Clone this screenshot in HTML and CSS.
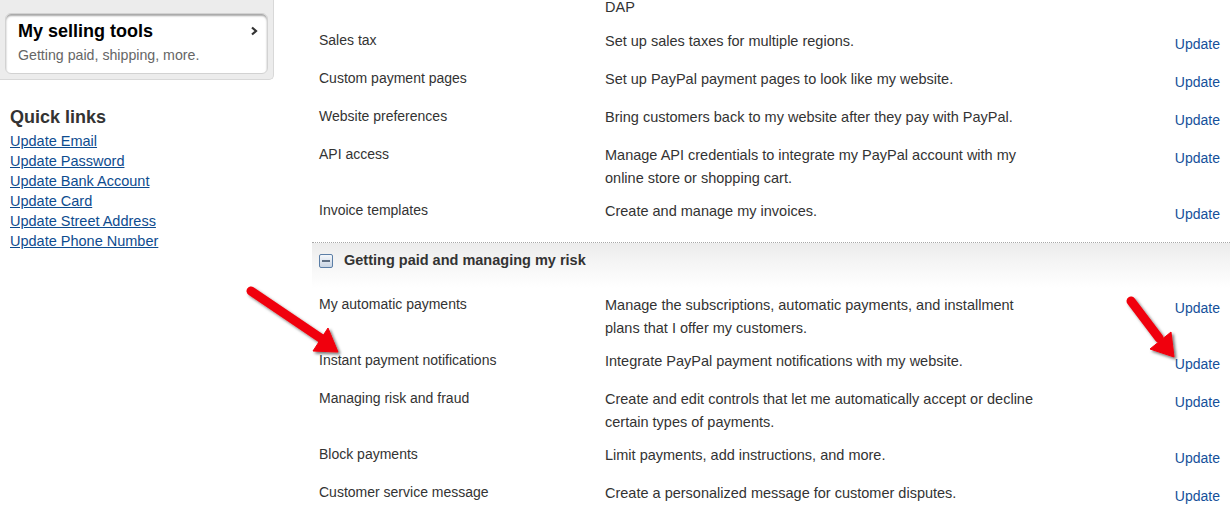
FILE: index.html
```html
<!DOCTYPE html>
<html lang="en">
<head>
<meta charset="utf-8">
<title>My selling tools</title>
<link rel="stylesheet" href="styles.css">
</head>
<body>
<div class="page">
  <aside class="sidebar">
    <div class="panel">
      <a class="tools-box" href="#">
        <div class="tools-title-row">
          <span class="tools-title">My selling tools</span>
          <svg class="chev" width="8" height="10" viewBox="0 0 8 10"><polyline points="2,1.5 6,5 2,8.5" fill="none" stroke="#333" stroke-width="2.2"/></svg>
        </div>
        <div class="tools-sub">Getting paid, shipping, more.</div>
      </a>
    </div>
    <h3 class="ql-title">Quick links</h3>
    <ul class="ql-list">
      <li><a href="#">Update Email</a></li>
      <li><a href="#">Update Password</a></li>
      <li><a href="#">Update Bank Account</a></li>
      <li><a href="#">Update Card</a></li>
      <li><a href="#">Update Street Address</a></li>
      <li><a href="#">Update Phone Number</a></li>
    </ul>
  </aside>

  <main class="main">
    <div class="row row-cont"><div class="label"></div><div class="desc">DAP</div><div class="action"></div></div>
    <div class="row"><div class="label">Sales tax</div><div class="desc">Set up sales taxes for multiple regions.</div><div class="action"><a href="#">Update</a></div></div>
    <div class="row"><div class="label">Custom payment pages</div><div class="desc">Set up PayPal payment pages to look like my website.</div><div class="action"><a href="#">Update</a></div></div>
    <div class="row"><div class="label">Website preferences</div><div class="desc">Bring customers back to my website after they pay with PayPal.</div><div class="action"><a href="#">Update</a></div></div>
    <div class="row"><div class="label">API access</div><div class="desc">Manage API credentials to integrate my PayPal account with my online store or shopping cart.</div><div class="action"><a href="#">Update</a></div></div>
    <div class="row"><div class="label">Invoice templates</div><div class="desc">Create and manage my invoices.</div><div class="action"><a href="#">Update</a></div></div>

    <section class="section">
      <div class="section-head">
        <span class="toggle"><span class="minus"></span></span>
        <span class="section-title">Getting paid and managing my risk</span>
      </div>
      <div class="row"><div class="label">My automatic payments</div><div class="desc">Manage the subscriptions, automatic payments, and installment plans that I offer my customers.</div><div class="action"><a href="#">Update</a></div></div>
      <div class="row"><div class="label">Instant payment notifications</div><div class="desc">Integrate PayPal payment notifications with my website.</div><div class="action"><a href="#">Update</a></div></div>
      <div class="row"><div class="label">Managing risk and fraud</div><div class="desc">Create and edit controls that let me automatically accept or decline certain types of payments.</div><div class="action"><a href="#">Update</a></div></div>
      <div class="row"><div class="label">Block payments</div><div class="desc">Limit payments, add instructions, and more.</div><div class="action"><a href="#">Update</a></div></div>
      <div class="row"><div class="label">Customer service message</div><div class="desc">Create a personalized message for customer disputes.</div><div class="action"><a href="#">Update</a></div></div>
    </section>
  </main>
</div>

<svg class="annotations" width="1230" height="523" viewBox="0 0 1230 523" aria-hidden="true">
  <defs>
    <filter id="sh" x="-20%" y="-20%" width="140%" height="140%">
      <feDropShadow dx="2" dy="2" stdDeviation="1.6" flood-color="#000" flood-opacity="0.55"/>
    </filter>
  </defs>
  <g filter="url(#sh)" fill="#f0060a" stroke="#f0060a">
    <line x1="251" y1="291" x2="322" y2="339" stroke-width="9" stroke-linecap="round"/>
    <polygon points="313,351 328,328 338,352" stroke-width="1" stroke-linejoin="round"/>
    <line x1="1131" y1="301" x2="1159" y2="338" stroke-width="9" stroke-linecap="round"/>
    <polygon points="1150,349 1171,332 1174,357" stroke-width="1" stroke-linejoin="round"/>
  </g>
</svg>
</body>
</html>
```

FILE: styles.css
```css
* { box-sizing: border-box; }

html, body {
  margin: 0;
  padding: 0;
  background: #fff;
}

body {
  font-family: "Liberation Sans", Arial, sans-serif;
  font-size: 14px;
  color: #333;
  width: 1230px;
  height: 523px;
  overflow: hidden;
  position: relative;
}

a { color: #0e4c8f; }

.page {
  display: flex;
  align-items: flex-start;
}

/* Sidebar */
.sidebar {
  width: 312px;
  flex: 0 0 312px;
}

.panel {
  width: 274px;
  height: 80px;
  background: #ececec;
  border-right: 1px solid #d8d8d8;
  border-bottom: 1px solid #d8d8d8;
  border-bottom-right-radius: 5px;
  padding: 13px 5px 0 5px;
}

.tools-box {
  display: block;
  height: 61px;
  background: #fff;
  border: 1px solid #d2d2d2;
  border-radius: 6px;
  box-shadow: inset 0 2px 2px rgba(0, 0, 0, 0.35);
  padding: 6px 9px 0 12px;
  text-decoration: none;
  color: #000;
}

.tools-title-row {
  display: flex;
  align-items: center;
  justify-content: space-between;
  height: 22px;
}

.tools-title {
  font-size: 18px;
  font-weight: bold;
  line-height: 22px;
  color: #000;
}

.chev { margin-top: -1px; }

.tools-sub {
  margin-top: 4px;
  font-size: 14.2px;
  line-height: 18px;
  color: #666;
}

.ql-title {
  margin: 26px 0 0 0;
  padding-left: 10px;
  font-size: 18px;
  line-height: 22px;
  font-weight: bold;
  color: #333;
}

.ql-list {
  list-style: none;
  margin: 3px 0 0 0;
  padding: 0 0 0 10px;
}

.ql-list li {
  line-height: 20px;
  font-size: 14.5px;
}

.ql-list a {
  color: #0e4c8f;
  text-decoration: underline;
}

/* Main */
.main {
  flex: 1;
  min-width: 0;
}

.row {
  display: grid;
  grid-template-columns: 293px 440px 1fr;
  min-height: 38px;
}

.label {
  padding: 7px 0 0 7px;
  line-height: 18px;
}

.desc {
  padding: 6px 0 4px 0;
  line-height: 23px;
  font-size: 14.5px;
}

.action {
  padding: 11px 10px 0 0;
  line-height: 18px;
  text-align: right;
}

.action a {
  text-decoration: none;
  color: #15509a;
}

.row-cont {
  min-height: 24px;
  height: 24px;
}

.row-cont .desc {
  padding: 0;
  line-height: 14px;
}

.section {
  margin-top: 10px;
}

.section-head {
  height: 46px;
  border-top: 1px dotted #a8a8a8;
  background: linear-gradient(to bottom, #ececec 0%, #f6f6f6 50%, #ffffff 100%);
  display: flex;
  align-items: flex-start;
  gap: 11px;
  padding: 10px 0 0 7px;
}

.toggle {
  width: 14px;
  height: 14px;
  margin-top: 1px;
  border: 1px solid #5b7ea6;
  border-radius: 2px;
  background: linear-gradient(to bottom, #f4f7fb, #c9d4e2);
  display: flex;
  align-items: center;
  justify-content: center;
}

.minus {
  width: 8px;
  height: 2px;
  background: #5e6e82;
}

.section-title {
  font-weight: bold;
  font-size: 14.5px;
  line-height: 15px;
  color: #333;
}

/* Annotation overlay (red arrows drawn over the screenshot) */
.annotations {
  position: absolute;
  left: 0;
  top: 0;
  pointer-events: none;
}
```
